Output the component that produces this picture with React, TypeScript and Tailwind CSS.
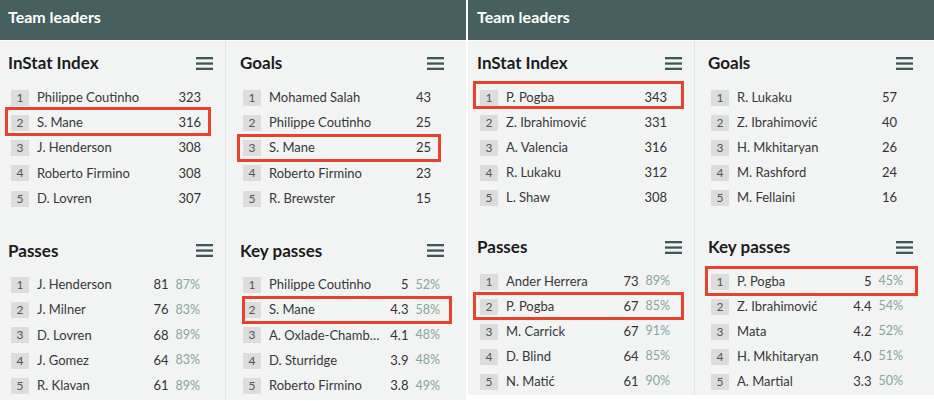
type Row = { name: string; value: string; pct?: string; hl?: string };

type Section = { title: string; rows: Row[]; pr: string };

type Column = { sections: Section[]; cls: string; gap: string };

type Panel = { cls: string; headPad: string; rowH: string; cols: Column[] };

const panels: Panel[] = [
  {
    cls: "h-[400px]",
    headPad: "pl-[8px]",
    rowH: "h-[25.25px]",
    cols: [
      {
        cls: "w-[226px] border-r border-[#e1e4e4] pl-[8px] pr-[12px]",
        gap: "mt-[27px]",
        sections: [
          {
            title: "InStat Index",
            pr: "pr-[12px]",
            rows: [
              { name: "Philippe Coutinho", value: "323" },
              { name: "S. Mane", value: "316", hl: "left-[-3px] right-[2px] top-[-3px] bottom-[0px]" },
              { name: "J. Henderson", value: "308" },
              { name: "Roberto Firmino", value: "308" },
              { name: "D. Lovren", value: "307" },
            ],
          },
          {
            title: "Passes",
            pr: "pr-[13px]",
            rows: [
              { name: "J. Henderson", value: "81", pct: "87%" },
              { name: "J. Milner", value: "76", pct: "83%" },
              { name: "D. Lovren", value: "68", pct: "89%" },
              { name: "J. Gomez", value: "64", pct: "83%" },
              { name: "R. Klavan", value: "61", pct: "89%" },
            ],
          },
        ],
      },
      {
        cls: "flex-1 pl-[14px] pr-[22px]",
        gap: "mt-[27px]",
        sections: [
          {
            title: "Goals",
            pr: "pr-[13px]",
            rows: [
              { name: "Mohamed Salah", value: "43" },
              { name: "Philippe Coutinho", value: "25" },
              { name: "S. Mane", value: "25", hl: "left-[-3px] right-[3px] top-[-2px] bottom-[-1px]" },
              { name: "Roberto Firmino", value: "23" },
              { name: "R. Brewster", value: "15" },
            ],
          },
          {
            title: "Key passes",
            pr: "pr-[4px]",
            rows: [
              { name: "Philippe Coutinho", value: "5", pct: "52%" },
              { name: "S. Mane", value: "4.3", pct: "58%", hl: "left-[2px] right-[-8px] top-[-2px] bottom-[-1px]" },
              { name: "A. Oxlade-Chamb\u2026", value: "4.1", pct: "48%" },
              { name: "D. Sturridge", value: "3.9", pct: "48%" },
              { name: "Roberto Firmino", value: "3.8", pct: "49%" },
            ],
          },
        ],
      },
    ],
  },
  {
    cls: "h-[395px]",
    headPad: "pl-[9px]",
    rowH: "h-[25px]",
    cols: [
      {
        cls: "w-[227px] border-r border-[#e1e4e4] pl-[9px] pr-[12px]",
        gap: "mt-[25px]",
        sections: [
          {
            title: "InStat Index",
            pr: "pr-[15px]",
            rows: [
              { name: "P. Pogba", value: "343", hl: "left-[-4px] right-[-2px] top-[-4px] bottom-[1px]" },
              { name: "Z. Ibrahimovi\u0107", value: "331" },
              { name: "A. Valencia", value: "316" },
              { name: "R. Lukaku", value: "312" },
              { name: "L. Shaw", value: "308" },
            ],
          },
          {
            title: "Passes",
            pr: "pr-[12px]",
            rows: [
              { name: "Ander Herrera", value: "73", pct: "89%" },
              { name: "P. Pogba", value: "67", pct: "85%", hl: "left-[-4px] right-[-2px] top-[-2px] bottom-[-1px]" },
              { name: "M. Carrick", value: "67", pct: "91%" },
              { name: "D. Blind", value: "64", pct: "85%" },
              { name: "N. Mati\u0107", value: "61", pct: "90%" },
            ],
          },
        ],
      },
      {
        cls: "flex-1 pl-[13px] pr-[21px]",
        gap: "mt-[25px]",
        sections: [
          {
            title: "Goals",
            pr: "pr-[16px]",
            rows: [
              { name: "R. Lukaku", value: "57" },
              { name: "Z. Ibrahimovi\u0107", value: "40" },
              { name: "H. Mkhitaryan", value: "26" },
              { name: "M. Rashford", value: "24" },
              { name: "M. Fellaini", value: "16" },
            ],
          },
          {
            title: "Key passes",
            pr: "pr-[10px]",
            rows: [
              { name: "P. Pogba", value: "5", pct: "45%", hl: "left-[-3px] right-[-5px] top-[-3px] bottom-[-2px]" },
              { name: "Z. Ibrahimovi\u0107", value: "4.4", pct: "54%" },
              { name: "Mata", value: "4.2", pct: "52%" },
              { name: "H. Mkhitaryan", value: "4.0", pct: "51%" },
              { name: "A. Martial", value: "3.3", pct: "50%" },
            ],
          },
        ],
      },
    ],
  },
];

function MenuIcon() {
  return (
    <svg width="17" height="13" viewBox="0 0 17 13" className="shrink-0">
      <rect x="0" y="0" width="17" height="2.3" fill="#3e5858" />
      <rect x="0" y="5.4" width="17" height="2.3" fill="#3e5858" />
      <rect x="0" y="10.7" width="17" height="2.3" fill="#3e5858" />
    </svg>
  );
}

function LeaderRow({ row, rank, pr, h }: { row: Row; rank: number; pr: string; h: string }) {
  return (
    <div className={`relative flex items-center pl-[3px] ${h} ${pr}`}>
      <div className="w-[18px] h-[16px] shrink-0 bg-[#dcdcdc] text-[#555] text-[12px] flex items-center justify-center">
        {rank}
      </div>
      <div className="ml-[8px] flex-1 min-w-0 truncate text-[13px] text-[#383838]">{row.name}</div>
      <div className="text-[13px] text-[#333] text-right">{row.value}</div>
      {row.pct && <div className="ml-[7px] text-[12.5px] text-[#89a4a1]">{row.pct}</div>}
      {row.hl && <div className={`absolute border-[3px] border-[#e8412c] pointer-events-none ${row.hl}`} />}
    </div>
  );
}

function LeaderSection({ section, cls, h }: { section: Section; cls: string; h: string }) {
  return (
    <div className={cls}>
      <div className="flex items-center justify-between h-[24px] mb-[10px]">
        <span className="text-[17px] font-bold text-[#1c1c1c]">{section.title}</span>
        <MenuIcon />
      </div>
      {section.rows.map((r, i) => (
        <LeaderRow key={i} row={r} rank={i + 1} pr={section.pr} h={h} />
      ))}
    </div>
  );
}

export default function App() {
  return (
    <div className="w-[934px] h-[401px] bg-white flex items-start gap-[2px]" style={{ fontFamily: "Lato, 'Noto Sans', sans-serif" }}>
      {panels.map((p, pi) => (
        <div key={pi} className={`w-[466px] bg-[#f2f3f3] flex flex-col ${p.cls}`}>
          <div className={`h-[40px] shrink-0 bg-[#475f5f] pt-[5px] ${p.headPad}`}>
            <span className="text-white text-[16px] font-bold leading-[24px]">Team leaders</span>
          </div>
          <div className="flex flex-1 border-t border-[#fafbfb]">
            {p.cols.map((c, ci) => (
              <div key={ci} className={`pt-[10px] ${c.cls}`}>
                {c.sections.map((s, si) => (
                  <LeaderSection key={si} section={s} cls={si > 0 ? c.gap : ""} h={p.rowH} />
                ))}
              </div>
            ))}
          </div>
        </div>
      ))}
    </div>
  );
}
